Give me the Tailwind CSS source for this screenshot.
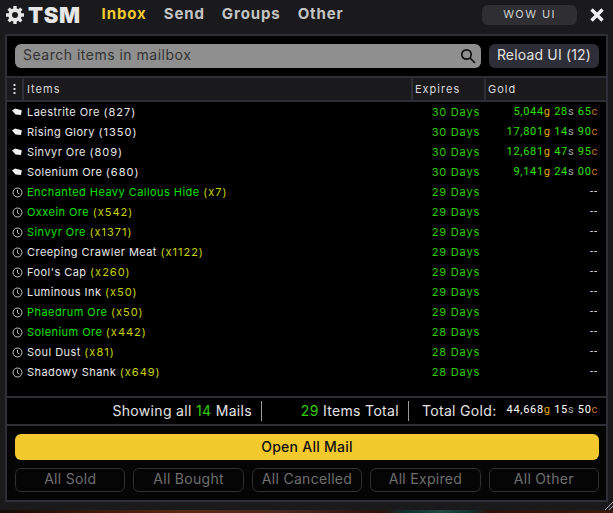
<!DOCTYPE html>
<html lang="en">
<head>
  <meta charset="UTF-8">
  <title>TSM Mailbox</title>
  <script src="https://cdn.jsdelivr.net/npm/@tailwindcss/browser@4"></script>
</head>
<body class="w-[613px] h-[513px] overflow-hidden font-['Inter','Liberation_Sans',sans-serif] bg-[linear-gradient(90deg,#140a06_0%,#3a1a0a_15%,#5a2a12_30%,#4a2a20_45%,#2a120a_62%,#10302c_66%,#204a40_72%,#10302c_77%,#2a1208_80%,#3a1a0c_100%)]">

  <div class="relative h-[510px] bg-[#1a1a1c] flex flex-col">
    <!-- title bar -->
    <div class="h-[34px] flex items-center pl-[6px] pr-[8px] pb-[5px]">
      <svg width="18" height="18" viewBox="0 0 24 24" class="text-[#e6e6e6]" fill="none">
        <circle cx="12" cy="12" r="6.500" stroke="currentColor" stroke-width="5"/>
        <path d="M12 0v5M12 19v5M0 12h5M19 12h5M3.500 3.500l3.500 3.500M17 17l3.500 3.500M3.500 20.500l3.500-3.500M17 7l3.500-3.500" stroke="currentColor" stroke-width="4.500"/>
      </svg>
      <span class="ml-[4px] text-[22px] leading-none font-black text-[#e6e6e6] tracking-[0.6px]">TSM</span>
      <nav class="ml-[21px] flex gap-[17px] text-[15px] font-bold tracking-[0.9px] text-[#c4c4c4]">
        <span class="text-[#f2ca2e]">Inbox</span>
        <span>Send</span>
        <span>Groups</span>
        <span>Other</span>
      </nav>
      <div class="ml-auto w-[95px] h-[20px] rounded-[6px] bg-[#2e2e33] flex items-center justify-center text-[11px] tracking-[1.4px] text-[#d0d0d0]">WOW UI</div>
      <svg width="14" height="14" viewBox="0 0 14 14" class="ml-[13px] mr-[1px]">
        <path d="M1.500 1.500l11 11M12.500 1.500l-11 11" stroke="#f0f0f0" stroke-width="3.400"/>
      </svg>
    </div>

    <!-- content -->
    <div class="mx-[5px] h-[468px] border-2 border-[#2e2e36] bg-[#050505] flex flex-col">
      <div class="h-[40px] shrink-0 flex items-start gap-[8px] pl-[8px] pr-[7px] pt-[8px] bg-black">
        <div class="flex-1 h-[24px] rounded-[6px] bg-[#8f8f8f] flex items-center pl-[8px] pr-[5px] text-[14px] tracking-[0.5px] text-[#333]">
          <span class="pb-[3px]">Search items in mailbox</span>
          <svg width="16" height="16" viewBox="0 0 16 16" class="ml-auto" fill="none" stroke="#111" stroke-width="1.700">
            <circle cx="6.500" cy="6.500" r="4.700"/><path d="M10 10l5 5"/>
          </svg>
        </div>
        <div class="w-[110px] h-[24px] pb-[3px] rounded-[6px] bg-[#2e2e38] flex items-center justify-center text-[14px] tracking-[0.17px] text-[#e0e0e0]">Reload UI (12)</div>
      </div>

      <!-- table head -->
      <div class="h-[26px] shrink-0 flex border-y-2 border-[#2e2e36] bg-[#1a1a1c] text-[11px] tracking-[1px] text-[#d8d8d8]">
        <div class="w-[17px] flex items-center justify-center border-r-2 border-[#2e2e36]">
          <svg width="3" height="10" viewBox="0 0 3 10" fill="#d8d8d8"><rect x="0.500" y="0" width="2" height="2"/><rect x="0.500" y="4" width="2" height="2"/><rect x="0.500" y="8" width="2" height="2"/></svg>
        </div>
        <div class="flex-1 flex items-center pl-[3px]">Items</div>
        <div class="w-[73px] flex items-center pl-[2px] border-l-2 border-[#2e2e36]">Expires</div>
        <div class="w-[122px] flex items-center pl-[2px] border-l-2 border-[#2e2e36]">Gold</div>
      </div>

      <!-- rows -->
      <div id="rows" class="h-[294px] shrink-0 bg-black text-[11px] tracking-[0.45px]"></div>

      <!-- summary -->
      <div class="h-[30px] shrink-0 flex items-center border-y-2 border-[#2e2e36] bg-black text-[14px] tracking-[0.33px] text-[#e4e4e4]">
        <div class="w-[255px] h-[20px] pb-[2px] flex items-center justify-end pr-[9px] border-r border-[#9a9a9a]">
          Showing all&nbsp;<span class="text-[#2fcc00]">14</span>&nbsp;Mails
        </div>
        <div class="w-[147px] h-[20px] pb-[2px] flex items-center justify-end pr-[9px] border-r border-[#9a9a9a]">
          <span class="text-[#2fcc00]">29</span>&nbsp;Items Total
        </div>
        <div class="flex-1 h-[20px] pb-[2px] flex items-center justify-end pr-[8px]">
          Total Gold:
          <span class="ml-[10px] text-[11px] font-['Roboto',sans-serif] text-white tracking-[0.7px]">44,668<span class="text-[#e0a800]">g</span> 15<span class="text-[#a8a8a8]">s</span> 50<span class="text-[#c8702a]">c</span></span>
        </div>
      </div>

      <!-- actions -->
      <div class="flex-1 flex flex-col gap-[8px] pl-[8px] pr-[7px] pt-[8px]">
        <div class="h-[26px] pb-[2px] rounded-[6px] bg-[#f2ca2e] flex items-center justify-center text-[14px] font-medium tracking-[0.25px] text-[#111]">Open All Mail</div>
        <div class="flex gap-[8px] text-[14px] tracking-[0.3px] text-[#6e6e6e]">
          <div class="flex-1 h-[24px] pb-[3px] rounded-[6px] border border-[#2e2e33] flex items-center justify-center">All Sold</div>
          <div class="flex-1 h-[24px] pb-[3px] rounded-[6px] border border-[#2e2e33] flex items-center justify-center">All Bought</div>
          <div class="flex-1 h-[24px] pb-[3px] rounded-[6px] border border-[#2e2e33] flex items-center justify-center">All Cancelled</div>
          <div class="flex-1 h-[24px] pb-[3px] rounded-[6px] border border-[#2e2e33] flex items-center justify-center">All Expired</div>
          <div class="flex-1 h-[24px] pb-[3px] rounded-[6px] border border-[#2e2e33] flex items-center justify-center">All Other</div>
        </div>
      </div>
    </div>

    <!-- resize handle -->
    <svg width="8" height="8" viewBox="0 0 8 8" class="absolute right-0 bottom-0" stroke="#b8b8b8" stroke-width="1">
      <path d="M0 8L8 0M4 8l4-4"/>
    </svg>
  </div>

  <script>
    const mailIcon = `<svg width="10" height="8" viewBox="0 0 10 8" class="shrink-0"><path d="M0 2.500L3 0.500L9.800 2.300L9 7L3.500 6.500Z" fill="#f2f2f2"/></svg>`;
    const clockIcon = `<svg width="11" height="11" viewBox="0 0 11 11" class="shrink-0" fill="none" stroke="#c8c8c8" stroke-width="1"><circle cx="5.500" cy="5.500" r="4.500"/><path d="M5.500 2.800v3l2 1.200"/></svg>`;

    const gold = (g, s, c) => `<span class="font-['Roboto',sans-serif] tracking-[0.7px] text-[#2fe000]">${g}<span class="text-[#e0a800]">g</span> ${s}<span class="text-[#a8a8a8]">s</span> ${c}<span class="text-[#c8702a]">c</span></span>`;
    const dash = `<span class="font-['Roboto',sans-serif] tracking-[1px]">--</span>`;

    const rows = [
      ['mail', 'Laestrite Ore', '(827)', 'w', '30 Days', gold('5,044', '28', '65')],
      ['mail', 'Rising Glory', '(1350)', 'w', '30 Days', gold('17,801', '14', '90')],
      ['mail', 'Sinvyr Ore', '(809)', 'w', '30 Days', gold('12,681', '47', '95')],
      ['mail', 'Solenium Ore', '(680)', 'w', '30 Days', gold('9,141', '24', '00')],
      ['clock', 'Enchanted Heavy Callous Hide', '(x7)', 'g', '29 Days', dash],
      ['clock', 'Oxxein Ore', '(x542)', 'g', '29 Days', dash],
      ['clock', 'Sinvyr Ore', '(x1371)', 'g', '29 Days', dash],
      ['clock', 'Creeping Crawler Meat', '(x1122)', 'w', '29 Days', dash],
      ['clock', "Fool's Cap", '(x260)', 'w', '29 Days', dash],
      ['clock', 'Luminous Ink', '(x50)', 'w', '29 Days', dash],
      ['clock', 'Phaedrum Ore', '(x50)', 'g', '29 Days', dash],
      ['clock', 'Solenium Ore', '(x442)', 'g', '28 Days', dash],
      ['clock', 'Soul Dust', '(x81)', 'w', '28 Days', dash],
      ['clock', 'Shadowy Shank', '(x649)', 'w', '28 Days', dash]
    ];

    document.getElementById('rows').innerHTML = rows.map(([icon, name, qty, tone, days, value]) => `
      <div class="h-[20px] flex items-center">
        <div class="w-[20px] pl-[5px] flex items-center">${icon === 'mail' ? mailIcon : clockIcon}</div>
        <div class="flex-1 ${tone === 'g' ? 'text-[#10e000]' : 'text-[#e8e8e8]'}">${name} <span class="tracking-[1px] ${icon === 'mail' ? 'text-[#e8e8e8]' : 'text-[#c8d400]'}">${qty}</span></div>
        <div class="w-[73px] pr-[4px] text-right tracking-[0.8px] text-[#2fcc00]">${days}</div>
        <div class="w-[122px] pr-[8px] text-right text-[#e8e8e8]">${value}</div>
      </div>`).join('');
  </script>

</body>
</html>
